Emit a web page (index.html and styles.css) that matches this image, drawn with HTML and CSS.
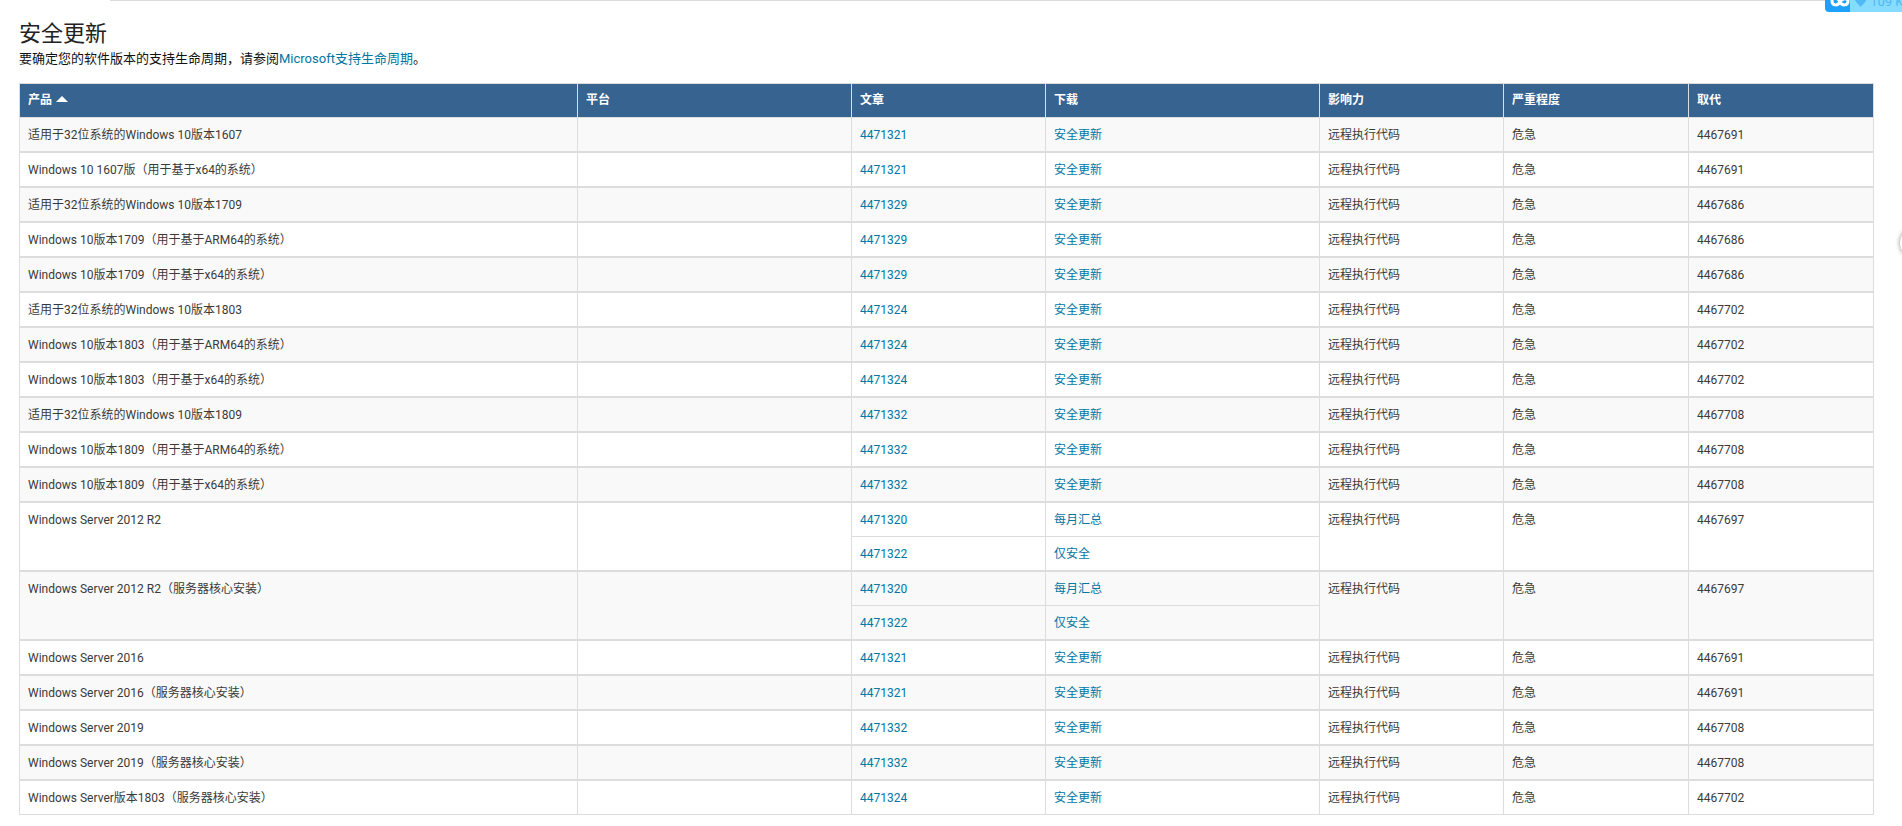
FILE: index.html
```html
<!DOCTYPE html>
<html lang="zh-CN">
  <head>
    <meta charset="UTF-8" />
    <meta name="viewport" content="width=device-width, initial-scale=1.0" />
    <title>安全更新</title>
    <link rel="stylesheet" href="styles.css">
  </head>
  <body>
    <div class="top-line"><div class="top-line-tab"></div></div>

    <!-- floating widgets -->
    <div class="share-widget">
      <span class="share-icon">
        <svg width="20" height="12" viewBox="0 0 20 12">
          <path d="M10 2 C8 -3 2 -3 2 1 C2 6 8 6 10 2 C12 -2 18 -2 18 1 C18 6 12 6 10 2" fill="none" stroke="#fff" stroke-width="3" />
        </svg>
      </span>
      <span class="share-count">&#9829; 109 K</span>
    </div>
    <div class="side-button"></div>

    <div class="content">
      <h2>安全更新</h2>
      <p class="intro">要确定您的软件版本的支持生命周期，请参阅<a href="#">Microsoft支持生命周期</a>。</p>

      <table class="updates">
        <colgroup>
          <col class="col-product" />
          <col class="col-platform" />
          <col class="col-article" />
          <col class="col-download" />
          <col class="col-impact" />
          <col class="col-severity" />
          <col class="col-replaces" />
        </colgroup>
        <thead>
          <tr>
            <th>产品 <span class="sort-up"></span></th>
            <th>平台</th>
            <th>文章</th>
            <th>下载</th>
            <th>影响力</th>
            <th>严重程度</th>
            <th>取代</th>
          </tr>
        </thead>
        <tbody>
          <tr><td>适用于32位系统的Windows 10版本1607</td><td></td><td><a href="#">4471321</a></td><td><a href="#">安全更新</a></td><td>远程执行代码</td><td>危急</td><td>4467691</td></tr>
        </tbody>
        <tbody>
          <tr><td>Windows 10 1607版（用于基于x64的系统）</td><td></td><td><a href="#">4471321</a></td><td><a href="#">安全更新</a></td><td>远程执行代码</td><td>危急</td><td>4467691</td></tr>
        </tbody>
        <tbody>
          <tr><td>适用于32位系统的Windows 10版本1709</td><td></td><td><a href="#">4471329</a></td><td><a href="#">安全更新</a></td><td>远程执行代码</td><td>危急</td><td>4467686</td></tr>
        </tbody>
        <tbody>
          <tr><td>Windows 10版本1709（用于基于ARM64的系统）</td><td></td><td><a href="#">4471329</a></td><td><a href="#">安全更新</a></td><td>远程执行代码</td><td>危急</td><td>4467686</td></tr>
        </tbody>
        <tbody>
          <tr><td>Windows 10版本1709（用于基于x64的系统）</td><td></td><td><a href="#">4471329</a></td><td><a href="#">安全更新</a></td><td>远程执行代码</td><td>危急</td><td>4467686</td></tr>
        </tbody>
        <tbody>
          <tr><td>适用于32位系统的Windows 10版本1803</td><td></td><td><a href="#">4471324</a></td><td><a href="#">安全更新</a></td><td>远程执行代码</td><td>危急</td><td>4467702</td></tr>
        </tbody>
        <tbody>
          <tr><td>Windows 10版本1803（用于基于ARM64的系统）</td><td></td><td><a href="#">4471324</a></td><td><a href="#">安全更新</a></td><td>远程执行代码</td><td>危急</td><td>4467702</td></tr>
        </tbody>
        <tbody>
          <tr><td>Windows 10版本1803（用于基于x64的系统）</td><td></td><td><a href="#">4471324</a></td><td><a href="#">安全更新</a></td><td>远程执行代码</td><td>危急</td><td>4467702</td></tr>
        </tbody>
        <tbody>
          <tr><td>适用于32位系统的Windows 10版本1809</td><td></td><td><a href="#">4471332</a></td><td><a href="#">安全更新</a></td><td>远程执行代码</td><td>危急</td><td>4467708</td></tr>
        </tbody>
        <tbody>
          <tr><td>Windows 10版本1809（用于基于ARM64的系统）</td><td></td><td><a href="#">4471332</a></td><td><a href="#">安全更新</a></td><td>远程执行代码</td><td>危急</td><td>4467708</td></tr>
        </tbody>
        <tbody>
          <tr><td>Windows 10版本1809（用于基于x64的系统）</td><td></td><td><a href="#">4471332</a></td><td><a href="#">安全更新</a></td><td>远程执行代码</td><td>危急</td><td>4467708</td></tr>
        </tbody>
        <tbody>
          <tr><td rowspan="2">Windows Server 2012 R2</td><td rowspan="2"></td><td><a href="#">4471320</a></td><td><a href="#">每月汇总</a></td><td rowspan="2">远程执行代码</td><td rowspan="2">危急</td><td rowspan="2">4467697</td></tr>
          <tr><td><a href="#">4471322</a></td><td><a href="#">仅安全</a></td></tr>
        </tbody>
        <tbody>
          <tr><td rowspan="2">Windows Server 2012 R2（服务器核心安装）</td><td rowspan="2"></td><td><a href="#">4471320</a></td><td><a href="#">每月汇总</a></td><td rowspan="2">远程执行代码</td><td rowspan="2">危急</td><td rowspan="2">4467697</td></tr>
          <tr><td><a href="#">4471322</a></td><td><a href="#">仅安全</a></td></tr>
        </tbody>
        <tbody>
          <tr><td>Windows Server 2016</td><td></td><td><a href="#">4471321</a></td><td><a href="#">安全更新</a></td><td>远程执行代码</td><td>危急</td><td>4467691</td></tr>
        </tbody>
        <tbody>
          <tr><td>Windows Server 2016（服务器核心安装）</td><td></td><td><a href="#">4471321</a></td><td><a href="#">安全更新</a></td><td>远程执行代码</td><td>危急</td><td>4467691</td></tr>
        </tbody>
        <tbody>
          <tr><td>Windows Server 2019</td><td></td><td><a href="#">4471332</a></td><td><a href="#">安全更新</a></td><td>远程执行代码</td><td>危急</td><td>4467708</td></tr>
        </tbody>
        <tbody>
          <tr><td>Windows Server 2019（服务器核心安装）</td><td></td><td><a href="#">4471332</a></td><td><a href="#">安全更新</a></td><td>远程执行代码</td><td>危急</td><td>4467708</td></tr>
        </tbody>
        <tbody>
          <tr><td>Windows Server版本1803（服务器核心安装）</td><td></td><td><a href="#">4471324</a></td><td><a href="#">安全更新</a></td><td>远程执行代码</td><td>危急</td><td>4467702</td></tr>
        </tbody>
      </table>
    </div>
  </body>
</html>
```

FILE: styles.css
```css
body {
  font-family: Roboto, "Noto Sans CJK SC", sans-serif;
  font-size: 12px;
  color: #3a3a3a;
  margin: 0;
  padding: 0;
  background-color: #fff;
  overflow: hidden;
}

a {
  color: #0076a3;
  text-decoration: none;
}

/* Top line */
.top-line {
  height: 1px;
  padding-left: 110px;
  background-color: #fff;
}

.top-line-tab {
  height: 1px;
  background-color: #ddd;
}

/* Floating widgets */
.share-widget {
  position: absolute;
  top: 0;
  right: 0;
  display: flex;
  width: 77px;
  height: 12px;
  overflow: hidden;
  border-bottom-left-radius: 4px;
  background-color: #1ea0ff;
}

.share-icon {
  display: block;
  width: 30px;
  padding-left: 5px;
  box-sizing: border-box;
}

.share-icon svg {
  display: block;
}

.share-count {
  flex: 1;
  margin-top: -5px;
  padding-left: 4px;
  line-height: 14px;
  font-size: 13px;
  color: #4fb8f5;
  background-color: #85dcff;
  white-space: nowrap;
}

.side-button {
  position: absolute;
  top: 228px;
  left: 1900px;
  width: 30px;
  height: 30px;
  border-radius: 50%;
  background-color: #fff;
  box-shadow: 0 0 5px rgba(0, 0, 0, 0.45);
}

/* Content */
.content {
  padding: 0 28px 0 19px;
}

h2 {
  font-size: 22px;
  font-weight: normal;
  line-height: 30px;
  color: #222;
  margin: 18px 0 0 0;
}

.intro {
  font-size: 13px;
  line-height: 18px;
  color: #111;
  margin: 1px 0 15px 0;
}

/* Table */
.updates {
  width: 1855px;
  table-layout: fixed;
  border-collapse: collapse;
}

.col-product { width: 558px; }
.col-platform { width: 274px; }
.col-article { width: 194px; }
.col-download { width: 274px; }
.col-impact { width: 184px; }
.col-severity { width: 185px; }
.col-replaces { width: 185px; }

.updates th,
.updates td {
  padding: 8px;
  line-height: 17px;
  text-align: left;
  vertical-align: top;
  border: 1px solid #ddd;
}

.updates td {
  padding-top: 9px;
  padding-bottom: 7px;
}

.updates th {
  color: #fff;
  background-color: #36638f;
}

.updates tbody + tbody {
  border-top: 2px solid #ddd;
}

.updates tbody:nth-of-type(odd) {
  background-color: #f9f9f9;
}

.sort-up {
  display: inline-block;
  margin-left: 1px;
  vertical-align: 2px;
  border-left: 6px solid transparent;
  border-right: 6px solid transparent;
  border-bottom: 6px solid #fff;
}
```
